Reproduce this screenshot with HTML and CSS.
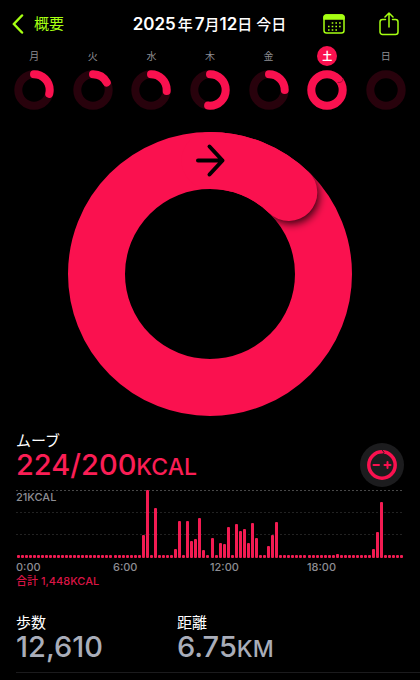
FILE: index.html
```html
<!DOCTYPE html>
<html lang="ja">
<head>
<meta charset="utf-8">
<meta name="viewport" content="width=device-width, initial-scale=1">
<title>アクティビティ</title>
<link rel="stylesheet" href="styles.css">
</head>
<body>
<header class="topbar">
  <a class="back" href="#">
    <svg width="12" height="20" viewBox="0 0 12 20" aria-hidden="true"><path d="M10 1.500 1.800 10l8.200 8.500"/></svg>
    <span>概要</span>
  </a>
  <h1 class="title">2025<span class="kanji gap">年</span>7<span class="kanji">月</span>12<span class="kanji">日 今日</span></h1>
  <div class="actions">
    <button class="icon-button" type="button" aria-label="カレンダー">
      <svg width="22" height="20" viewBox="0 0 22 20"><rect x="1" y="1" width="20" height="18" rx="2.500"/><path class="solid" d="M1 5V3.500A2.500 2.500 0 0 1 3.500 1h15A2.500 2.500 0 0 1 21 3.500V5z"/><path class="dots" d="M8.700 9h9M5 12.500h12.700M5 16h9"/></svg>
    </button>
    <button class="icon-button" type="button" aria-label="共有">
      <svg width="20" height="24" viewBox="0 0 20 24"><path d="M6.500 7.500H3.500A2.500 2.500 0 0 0 1 10v10A2.500 2.500 0 0 0 3.500 22.500h13A2.500 2.500 0 0 0 19 20V10A2.500 2.500 0 0 0 16.500 7.500h-3M10 15V1M6 5l4-4 4 4"/></svg>
    </button>
  </div>
</header>

<nav class="week" id="week" aria-label="週"></nav>

<main>
  <svg class="ring" viewBox="0 0 284 284" role="img" aria-label="ムーブリング">
    <defs>
      <clipPath id="band"><path clip-rule="evenodd" d="M142 0a142 142 0 1 1 0 284a142 142 0 1 1 0-284zM142 57a85 85 0 1 0 0 170a85 85 0 1 0 0-170z"/></clipPath>
      <filter id="soft" x="-50%" y="-50%" width="200%" height="200%"><feGaussianBlur stdDeviation="4"/></filter>
    </defs>
    <circle class="band" cx="142" cy="142" r="113.500"/>
    <g clip-path="url(#band)">
      <circle class="shade" cx="223" cy="64" r="28" filter="url(#soft)"/>
    </g>
    <path class="band tip" d="M142 28.500A113.500 113.500 0 0 1 220.800 60.400"/>
    <path class="arrow" d="M130 28.500h24.500M141.500 14.500l13 14-13 14"/>
  </svg>

  <section class="move">
    <div class="move-head">
      <div>
        <h2 class="label">ムーブ</h2>
        <p class="value move-value">224/200<span class="unit">KCAL</span></p>
      </div>
      <button class="goal" type="button" aria-label="ゴールを変更">
        <svg width="32" height="32" viewBox="0 0 32 32"><circle cx="16" cy="16" r="13.200"/><path class="notch" d="m16.500 1.500 1.500 2-1.500 2"/><path class="signs" d="M7.500 16h5.500M18.500 16h6M21.500 13v6"/></svg>
      </button>
    </div>
    <div class="chart">
      <span class="peak">21KCAL</span>
      <div class="bars" id="bars"></div>
    </div>
    <div class="hours"><span>0:00</span><span>6:00</span><span>12:00</span><span>18:00</span></div>
    <p class="total">合計 1,448KCAL</p>
  </section>

  <section class="stats">
    <div><h2 class="label">歩数</h2><p class="value">12,610</p></div>
    <div><h2 class="label">距離</h2><p class="value">6.75<span class="unit">KM</span></p></div>
  </section>
</main>
<script src="app.js"></script>
</body>
</html>
```
FILE: styles.css
```css
* { box-sizing: border-box; }
body {
  margin: 0;
  background: #000;
  color: #fff;
  font-family: Inter, "Noto Sans CJK JP", sans-serif;
}
h1, h2, p { margin: 0; font-weight: 400; }
svg { display: block; fill: none; stroke-linecap: round; stroke-linejoin: round; }
button { padding: 0; border: 0; background: none; }

.topbar {
  display: grid;
  grid-template-columns: 1fr auto 1fr;
  align-items: center;
  height: 48px;
  padding: 0 21px 0 12px;
}
.back {
  display: flex;
  align-items: center;
  gap: 10px;
  color: #a6ff12;
  font-size: 15px;
  line-height: 20px;
  text-decoration: none;
}
.back svg { stroke: #a6ff12; stroke-width: 2.5; }
.title { margin-left: 8px; font-size: 17px; font-weight: 600; line-height: 24px; white-space: nowrap; }
.kanji { font-size: 15px; font-weight: 500; }
.gap { margin: 0 2px; }
.actions { display: flex; justify-content: flex-end; align-items: center; gap: 34px; }
.icon-button svg { stroke: #a6ff12; stroke-width: 1.5; }
.icon-button .solid { fill: #a6ff12; }
.icon-button .dots { stroke-width: 1.6; stroke-linecap: butt; stroke-dasharray: 1.6 2.1; }

.week { display: grid; grid-template-columns: repeat(7, 1fr); padding: 0 5px; }
.day {
  display: flex;
  flex-direction: column;
  align-items: center;
  color: #8e8e93;
  font-size: 10px;
  text-decoration: none;
}
.day span { width: 20px; line-height: 20px; border-radius: 50%; text-align: center; margin-top: -2px; }
.day.today span { background: #fa114f; color: #fff; font-weight: 700; }
.day svg { width: 40px; height: 40px; margin-top: 4px; stroke-width: 8; }
.day .track { stroke: #28020c; }
.day .arc { stroke: #fa114f; }
.day .edge { stroke: #a00a34; stroke-width: 1; }

.ring { width: 68%; max-width: 284px; margin: 22px auto 0; }
.band { stroke: #fa114f; stroke-width: 57; }
.shade { fill: #000; fill-opacity: 0.8; }
.arrow { stroke: #000; stroke-width: 4; }

.move { padding: 15px 16px 0; }
.move-head { display: flex; justify-content: space-between; align-items: center; }
.label { font-size: 15px; line-height: 20px; }
.value { color: #a9adb9; font-size: 29px; font-weight: 500; line-height: 28px; }
.move-value { color: #fa1e55; }
.unit { font-size: 23px; }
.goal {
  display: grid;
  place-items: center;
  width: 44px;
  height: 44px;
  border-radius: 50%;
  background: #1c1c1e;
  margin: 10px 0 -8px;
}
.goal svg { stroke: #fa114f; stroke-width: 3.5; }
.goal .notch { stroke: #1c1c1e; stroke-width: 1; }
.goal .signs { stroke-width: 2; }

.chart {
  position: relative;
  height: 68px;
  margin-top: 9px;
  background:
    repeating-linear-gradient(90deg, transparent 0 2px, #000 2px 4px),
    linear-gradient(#484848, #484848) 0 0 / 100% 1px no-repeat,
    linear-gradient(#222, #222) 0 22px / 100% 1px no-repeat,
    linear-gradient(#222, #222) 0 44px / 100% 1px no-repeat;
}
.peak { position: absolute; top: 1px; left: 0; color: #8e8e93; font-size: 11px; font-weight: 500; line-height: 13px; }
.bars { display: grid; grid-template-columns: repeat(96, 1fr); align-items: end; height: 100%; }
.bars i { width: 3px; border-radius: 1px; background: #f21b52; justify-self: center; }
.hours { display: grid; grid-template-columns: repeat(4, 1fr); color: #8e8e93; font-size: 11px; font-weight: 500; line-height: 16px; margin-top: 1px; }
.total { color: #d91545; font-size: 11px; font-weight: 500; line-height: 12px; }

.stats {
  display: grid;
  grid-template-columns: 161px 1fr;
  margin: 26px 0 0 16px;
  padding-bottom: 9px;
  border-bottom: 1px solid #1b1b1d;
}
```
FILE: app.js
```js
const days = [
  ["月", 0.29], ["火", 0.17], ["水", 0.26], ["木", 0.52],
  ["金", 0.25], ["土", 1], ["日", 0]
];

document.getElementById("week").innerHTML = days.map(([name, part]) => {
  const arc = part
    ? `<circle class="arc" cx="20" cy="20" r="15.7" pathLength="100" stroke-dasharray="${part * 100} 100" transform="rotate(-90 20 20)"/>`
    : "";
  const edge = part === 1 ? '<path class="edge" d="M36 9q0 4-5 3.500"/>' : "";
  return `<a href="#" class="day${part === 1 ? " today" : ""}"><span>${name}</span>` +
    `<svg viewBox="0 0 40 40" aria-hidden="true"><circle class="track" cx="20" cy="20" r="15.7"/>${arc}${edge}</svg></a>`;
}).join("");

// Energy per quarter hour; quarters that are not listed stay at the base height.
const peaks = {
  31: 23, 32: 68, 34: 50, 39: 9, 40: 37, 42: 37, 43: 17, 44: 19, 45: 40, 46: 8,
  48: 20, 50: 15, 51: 14, 52: 31, 54: 34, 55: 27, 56: 29, 57: 15, 58: 35, 59: 20,
  62: 12, 63: 23, 64: 36, 79: 4, 88: 9, 89: 26, 90: 56
};

document.getElementById("bars").innerHTML = Array.from({ length: 96 }, (_, i) =>
  `<i style="height:${peaks[i] || 3}px"></i>`).join("");
```
